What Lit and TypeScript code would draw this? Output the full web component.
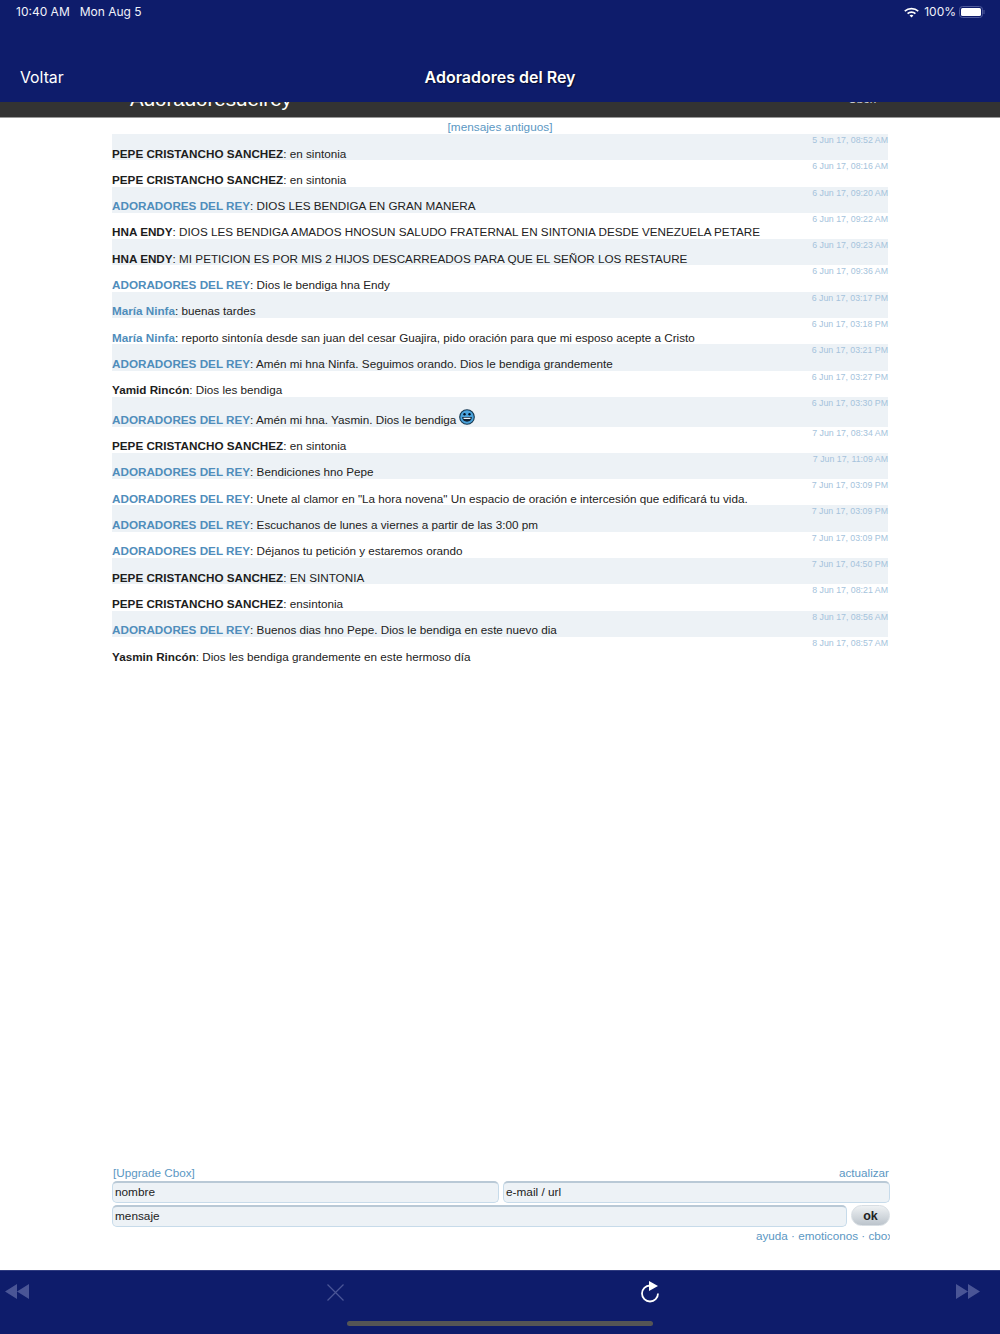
import { LitElement, html, css } from "lit";
import { customElement } from "lit/decorators.js";

type Row = { d: string; n: string; t: string; a?: boolean; e?: boolean };
const A = "ADORADORES DEL REY";
const P = "PEPE CRISTANCHO SANCHEZ";
const rows: Row[] = [
  { d: "5 Jun 17, 08:52 AM", n: P, t: "en sintonia" },
  { d: "6 Jun 17, 08:16 AM", n: P, t: "en sintonia" },
  { d: "6 Jun 17, 09:20 AM", n: A, a: true, t: "DIOS LES BENDIGA EN GRAN MANERA" },
  { d: "6 Jun 17, 09:22 AM", n: "HNA ENDY", t: "DIOS LES BENDIGA AMADOS HNOSUN SALUDO FRATERNAL EN SINTONIA DESDE VENEZUELA PETARE" },
  { d: "6 Jun 17, 09:23 AM", n: "HNA ENDY", t: "MI PETICION ES POR MIS 2 HIJOS DESCARREADOS PARA QUE EL SEÑOR LOS RESTAURE" },
  { d: "6 Jun 17, 09:36 AM", n: A, a: true, t: "Dios le bendiga hna Endy" },
  { d: "6 Jun 17, 03:17 PM", n: "María Ninfa", a: true, t: "buenas tardes" },
  { d: "6 Jun 17, 03:18 PM", n: "María Ninfa", a: true, t: "reporto sintonía desde san juan del cesar Guajira, pido oración para que mi esposo acepte a Cristo" },
  { d: "6 Jun 17, 03:21 PM", n: A, a: true, t: "Amén mi hna Ninfa. Seguimos orando. Dios le bendiga grandemente" },
  { d: "6 Jun 17, 03:27 PM", n: "Yamid Rincón", t: "Dios les bendiga" },
  { d: "6 Jun 17, 03:30 PM", n: A, a: true, t: "Amén mi hna. Yasmin. Dios le bendiga", e: true },
  { d: "7 Jun 17, 08:34 AM", n: P, t: "en sintonia" },
  { d: "7 Jun 17, 11:09 AM", n: A, a: true, t: "Bendiciones hno Pepe" },
  { d: "7 Jun 17, 03:09 PM", n: A, a: true, t: 'Unete al clamor en "La hora novena" Un espacio de oración e intercesión que edificará tu vida.' },
  { d: "7 Jun 17, 03:09 PM", n: A, a: true, t: "Escuchanos de lunes a viernes a partir de las 3:00 pm" },
  { d: "7 Jun 17, 03:09 PM", n: A, a: true, t: "Déjanos tu petición y estaremos orando" },
  { d: "7 Jun 17, 04:50 PM", n: P, t: "EN SINTONIA" },
  { d: "8 Jun 17, 08:21 AM", n: P, t: "ensintonia" },
  { d: "8 Jun 17, 08:56 AM", n: A, a: true, t: "Buenos dias hno Pepe. Dios le bendiga en este nuevo dia" },
  { d: "8 Jun 17, 08:57 AM", n: "Yasmin Rincón", t: "Dios les bendiga grandemente en este hermoso día" },
];

@customElement("app-root")
export class AppRoot extends LitElement {
  static styles = css`
    :host { display: flex; flex-direction: column; width: 1000px; height: 1334px; overflow: hidden; background: #fff; font-family: "Liberation Sans", Arial, sans-serif; color: #222; }
    .top { height: 102px; flex: none; background: #0e1c6b; color: #fff; position: relative; z-index: 2; font-family: Inter, sans-serif; }
    .status { display: flex; align-items: center; height: 23px; padding: 0 15px 0 16px; font-size: 12px; color: #f0f2fa; }
    .status .date { margin-left: 10px; }
    .status .right { margin-left: auto; display: flex; align-items: center; gap: 5px; }
    .status .batt { margin-left: -2px; }
    .nav { display: grid; grid-template-columns: 1fr auto 1fr; align-items: center; height: 30px; margin-top: 39px; padding: 0 20px; }
    .back { font-size: 15.8px; font-weight: 400; }
    .title { font-size: 16px; font-weight: 600; text-shadow: 1px 1px 1px rgba(0,0,0,.6); }
    .dark { height: 16px; flex: none; background: #333; border-bottom: 1px solid #999; box-sizing: border-box; position: relative; overflow: hidden; color: #fff; }
    .brand { position: absolute; left: 130px; top: -17px; font-size: 20.5px; line-height: 28px; }
    .cbox { position: absolute; left: 848px; top: -10px; font-size: 12px; line-height: 14px; color: #ccc; }
    .main { flex: 1; display: flex; flex-direction: column; width: 776px; margin: 0 auto 0 112px; min-height: 0; }
    .old { height: 16px; line-height: 18px; text-align: center; font-size: 11.8px; color: #5b97c3; }
    .row { position: relative; height: 26.3px; box-sizing: border-box; font-size: 11.7px; line-height: 14px; padding-top: 12.6px; white-space: nowrap; }
    .row.tall { height: 29.6px; padding-top: 16px; }
    .row:nth-child(odd) { background: #edf2f6; }
    .row time { position: absolute; right: 0; top: 1px; font-size: 8.8px; line-height: 10px; color: #a5c3dc; }
    .row b { font-weight: 700; color: #1d1d1d; }
    .row b.a { color: #4f8dbb; }
    .row svg { position: absolute; margin-left: 3px; top: 12px; }
    .form { margin-top: auto; width: 778px; padding-bottom: 26px; font-size: 11.7px; }
    .links { display: flex; justify-content: space-between; height: 17px; line-height: 17px; color: #5b97c3; font-size: 11.7px; padding: 0 1px; }
    .inputs { display: flex; gap: 4px; margin-bottom: 2px; }
    .inp { flex: 1; height: 22px; box-sizing: border-box; border: 1px solid #c7dbea; border-top: 2px solid #b9c9d6; border-radius: 5px; background: #edf2f6; font-size: 11.8px; line-height: 18px; padding-left: 2px; color: #222; }
    .ok { flex: none; width: 39px; height: 21px; box-sizing: border-box; border: 1px solid #d8dee3; border-radius: 11px; background: linear-gradient(#eef1f3, #bcc4cc); text-align: center; font-weight: 700; font-size: 12.5px; line-height: 21px; color: #222; }
    .foot { text-align: right; height: 15px; line-height: 14px; margin-top: 1px; color: #5b97c3; font-size: 11.7px; overflow: hidden; }
    .foot span { display: inline-block; width: 134px; white-space: nowrap; overflow: hidden; text-align: left; }
    .bar { position: relative; height: 64px; flex: none; background: #0e1c6b; border-top: 1px solid #2f3b80; box-sizing: border-box; }
    .tools { display: flex; align-items: flex-start; padding: 10px 20px 0 5px; }
    .tools svg { display: block; }
    .tools .rw { margin-top: 3px; }
    .tools .x { margin: 3px 0 0 298px; }
    .tools .r { margin-left: 296px; }
    .tools .f { margin: 3px 0 0 auto; }
    .home { position: absolute; left: 347px; top: 50px; width: 306px; height: 5px; border-radius: 3px; background: #555; }
  `;

  render() {
    return html`
      <div class="top">
        <div class="status">
          <span>10:40 AM</span><span class="date">Mon Aug 5</span>
          <div class="right">
            <svg width="15" height="12" viewBox="0 0 14 11"><path d="M7 1.500a10 10 0 0 1 6.800 2.700l-1 1.100A8.500 8.500 0 0 0 7 3.100a8.500 8.500 0 0 0-5.800 2.200l-1-1.100A10 10 0 0 1 7 1.500Zm0 3.300a6 6 0 0 1 4.200 1.700l-1.100 1.100A4.500 4.500 0 0 0 7 6.400a4.500 4.500 0 0 0-3.100 1.200L2.800 6.500A6 6 0 0 1 7 4.800Zm0 3.200c.7 0 1.300.2 1.800.7L7 10.600 5.200 8.700c.5-.5 1.100-.7 1.800-.7Z" fill="#fff"/></svg>
            <span>100%</span>
            <svg class="batt" width="26" height="12" viewBox="0 0 26 12"><rect x=".5" y=".5" width="23" height="11" rx="3" fill="none" stroke="#4f5a9c"/><rect x="2" y="2" width="20" height="8" rx="1.500" fill="#fff"/><rect x="24.500" y="4" width="1" height="4" fill="#4f5a9c"/></svg>
          </div>
        </div>
        <div class="nav"><span class="back">Voltar</span><span class="title">Adoradores del Rey</span><span></span></div>
      </div>
      <div class="dark"><span class="brand">Adoradoresdelrey</span><span class="cbox">Cbox</span></div>
      <div class="main">
        <div class="old">[mensajes antiguos]</div>
        <div>
          ${rows.map(r => html`<div class="row ${r.e ? "tall" : ""}">
            <time>${r.d}</time><b class=${r.a ? "a" : ""}>${r.n}</b>: ${r.t}${r.e ? html`<svg width="16" height="16" viewBox="0 0 16 16"><circle cx="8" cy="8" r="7.300" fill="#4aa3dc" stroke="#17384f" stroke-width="1.100"/><circle cx="5.500" cy="5.200" r="1.200" fill="#012"/><circle cx="10.500" cy="5.200" r="1.200" fill="#012"/><path d="M3.200 8h9.600c0 2.800-2.100 4.700-4.800 4.700S3.200 10.800 3.200 8Z" fill="#123"/><path d="M4.500 8.700h7v1.300h-7Z" fill="#e6f2fa"/></svg>` : ""}
          </div>`)}
        </div>
        <div class="form">
          <div class="links"><span>[Upgrade Cbox]</span><span>actualizar</span></div>
          <div class="inputs"><div class="inp">nombre</div><div class="inp">e-mail / url</div></div>
          <div class="inputs"><div class="inp">mensaje</div><div class="ok">ok</div></div>
          <div class="foot"><span>ayuda · emoticonos · cbox</span></div>
        </div>
      </div>
      <div class="bar">
        <div class="tools">
          <svg class="rw" width="24" height="15" viewBox="0 0 24 15"><path d="M12 0v15L0 7.500ZM24 0v15L12 7.500Z" fill="#4a5596"/></svg>
          <svg class="x" width="17" height="17" viewBox="0 0 17 17"><path d="M.5.5l16 16M16.500.5l-16 16" stroke="#4a5596" stroke-width="1.200" fill="none"/></svg>
          <svg class="r" width="20" height="22" viewBox="0 0 20 22"><path d="M10 4.500a8 8 0 1 0 8 8" fill="none" stroke="#fff" stroke-width="1.800"/><path d="M9 0l9 5-9 5Z" fill="#fff"/></svg>
          <svg class="f" width="24" height="15" viewBox="0 0 24 15"><path d="M0 0v15l12-7.500ZM12 0v15l12-7.500Z" fill="#4a5596"/></svg>
        </div>
        <div class="home"></div>
      </div>
    `;
  }
}
